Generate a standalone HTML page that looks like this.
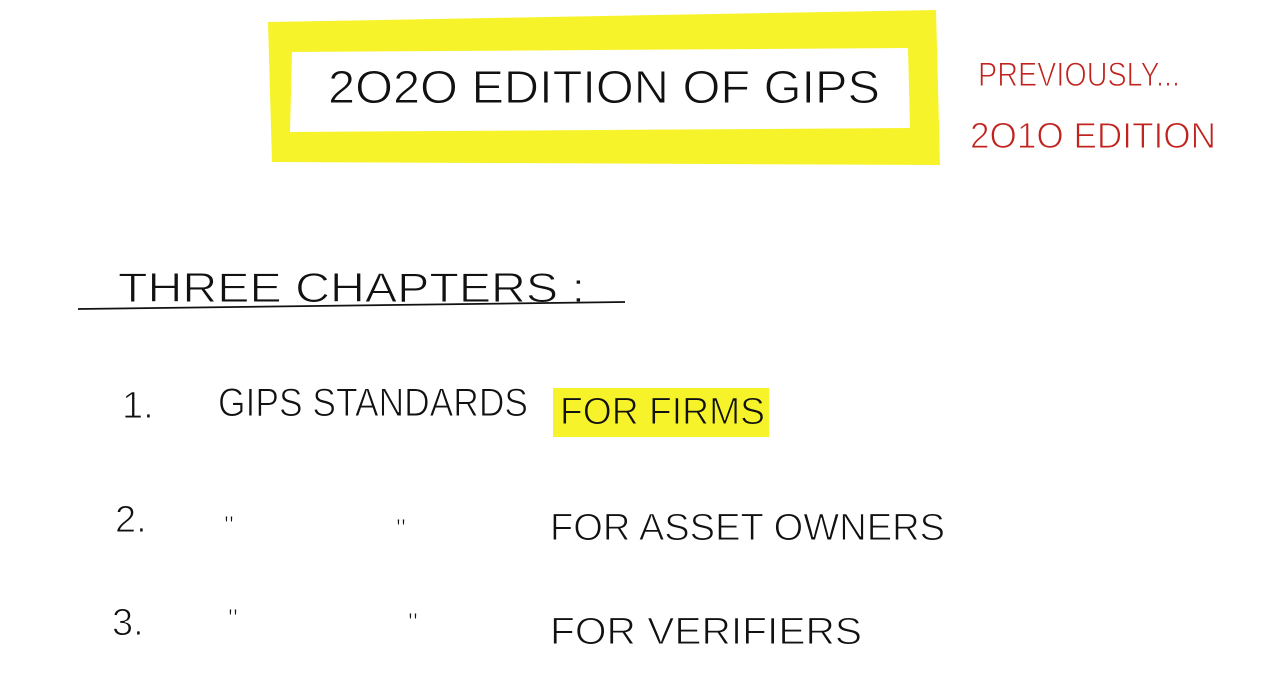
<!DOCTYPE html>
<html><head><meta charset="utf-8"><style>
html,body{margin:0;padding:0;background:#fff;width:1266px;height:692px;overflow:hidden}
svg{display:block}
text{font-family:"Liberation Sans",sans-serif;font-weight:normal;stroke:#fff;stroke-width:1;paint-order:fill}
.y text{stroke:#f7f32a}
</style></head><body>
<svg width="1266" height="692" viewBox="0 0 1266 692">
  <polygon points="268,22 936,10 940,165 272,162" fill="#f7f32a"/>
  <polygon points="292,52 908,48 910,128 290,132" fill="#fff"/>
  <text x="328" y="103" font-size="46" fill="#111" textLength="552" lengthAdjust="spacingAndGlyphs">2O2O EDITION OF GIPS</text>
  <text x="978" y="86" font-size="34" fill="#c0231e" textLength="202" lengthAdjust="spacingAndGlyphs">PREVIOUSLY...</text>
  <text x="970" y="148" font-size="36" fill="#c0231e" textLength="246" lengthAdjust="spacingAndGlyphs">2O1O EDITION</text>
  <text x="118" y="302" font-size="42" fill="#111" textLength="467" lengthAdjust="spacingAndGlyphs">THREE  CHAPTERS :</text>
  <line x1="78" y1="309" x2="625" y2="302" stroke="#111" stroke-width="1.8"/>
  <text x="122" y="418" font-size="38" fill="#111">1.</text>
  <text x="218" y="416" font-size="40" fill="#111" textLength="310" lengthAdjust="spacingAndGlyphs">GIPS  STANDARDS</text>
  <rect x="553" y="388" width="216" height="49" fill="#f7f32a"/>
  <g class="y"><text x="560" y="424" font-size="38" fill="#111" textLength="205" lengthAdjust="spacingAndGlyphs">FOR  FIRMS</text></g>
  <text x="115" y="532" font-size="38" fill="#111">2.</text>
  <text x="224" y="535" font-size="28" fill="#111">"</text>
  <text x="396" y="538" font-size="28" fill="#111">"</text>
  <text x="550" y="540" font-size="38" fill="#111" textLength="395" lengthAdjust="spacingAndGlyphs">FOR  ASSET  OWNERS</text>
  <text x="112" y="635" font-size="38" fill="#111">3.</text>
  <text x="228" y="628" font-size="28" fill="#111">"</text>
  <text x="408" y="632" font-size="28" fill="#111">"</text>
  <text x="550" y="644" font-size="38" fill="#111" textLength="312" lengthAdjust="spacingAndGlyphs">FOR  VERIFIERS</text>
</svg>
</body></html>
